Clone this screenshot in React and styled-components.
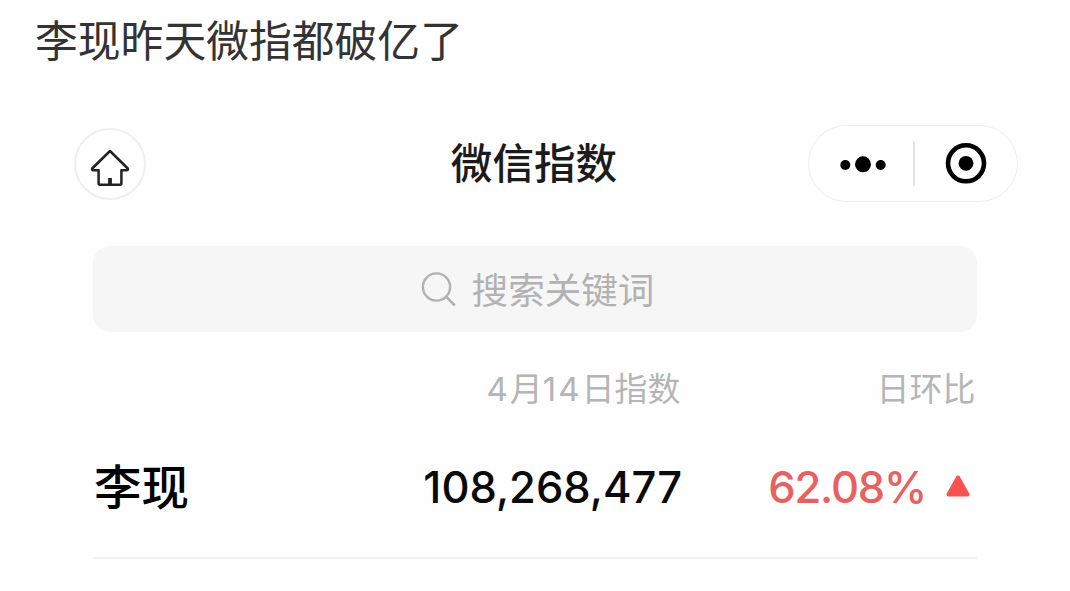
import React from "react";
import styled, { createGlobalStyle } from "styled-components";

const GlobalStyle = createGlobalStyle`
  * {
    box-sizing: border-box;
  }

  body {
    margin: 0;
    background: #fefefe;
    font-family: Inter, "Noto Sans CJK SC", sans-serif;
    overflow: hidden;
  }
`;

const Page = styled.div`
  width: 1070px;
  height: 591px;
  display: flex;
  flex-direction: column;
`;

const Caption = styled.p`
  margin: 0;
  padding: 12px 0 0 35px;
  height: 125px;
  color: #333;
  font-size: 42.8px;
  line-height: 60px;
  white-space: nowrap;
`;

const Nav = styled.header`
  display: grid;
  grid-template-columns: 1fr auto 1fr;
  align-items: center;
  height: 77px;
  padding: 0 76px 0 74px;
`;

const HomeButton = styled.button`
  display: flex;
  align-items: center;
  justify-content: center;
  width: 72px;
  height: 72px;
  padding: 6px 0 0;
  border: 2px solid #efefef;
  border-radius: 50%;
  background: #fff;
`;

const Title = styled.h1`
  margin: 0;
  color: #1b1b1b;
  font-size: 41.6px;
  font-weight: 500;
  line-height: 60px;
  white-space: nowrap;
`;

const Capsule = styled.div`
  display: flex;
  align-items: center;
  justify-self: end;
  width: 210px;
  height: 77px;
  margin-right: -24px;
  border: 1.5px solid #eee;
  border-radius: 39px;
  background: #fff;
`;

const CapsuleButton = styled.button`
  display: flex;
  align-items: center;
  justify-content: center;
  width: ${(props) => props.$width};
  height: 100%;
  padding: 0 0 0 ${(props) => props.$indent};
  border: none;
  background: none;
`;

const Divider = styled.span`
  width: 2px;
  height: 45px;
  background: #e2e2e2;
`;

const SearchBar = styled.div`
  display: flex;
  align-items: center;
  justify-content: center;
  gap: 15px;
  height: 86px;
  margin: 44px 93px 0;
  padding-left: 5px;
  border-radius: 17px;
  background: #f6f6f7;
  color: #b2b2b2;
  font-size: 36.6px;
  line-height: 54px;
`;

const Placeholder = styled.span`
  padding-top: 3px;
`;

const Table = styled.section`
  margin: 0 93px;
`;

const Row = styled.div`
  display: grid;
  grid-template-columns: 200px 389px 1fr;
  align-items: center;
`;

const HeadRow = styled(Row)`
  height: 112px;
  padding-top: 2px;
  color: #b5b5b5;
  font-size: 33px;
`;

const DataRow = styled(Row)`
  height: 115px;
  padding-bottom: 27px;
  border-bottom: 2px solid #f3f3f3;
`;

const Cell = styled.span`
  justify-self: end;
  line-height: 60px;
  white-space: nowrap;
`;

const HeadCell = styled(Cell)`
  padding-right: 1.5px;
`;

const Digits = styled.span`
  letter-spacing: 2px;
`;

const Keyword = styled.span`
  padding: 1px 0 0 1px;
  color: #000;
  font-size: 47.5px;
  font-weight: 500;
  line-height: 60px;
`;

const Value = styled(Cell)`
  color: ${(props) => props.$color};
  font-size: 43.5px;
  font-weight: 500;
  letter-spacing: ${(props) => props.$spacing};
`;

const Change = styled.div`
  display: flex;
  align-items: center;
  justify-content: flex-end;
  gap: 20px;
  padding-right: 7px;

  && svg {
    margin-bottom: 2px;
  }
`;

const HomeIcon = () => (
  <svg width="40" height="40" viewBox="0 0 40 40" fill="none">
    <path
      d="M20 4 L37.8 21.5 Q38.5 23.3 36.5 23.3 H31.4 V36.2 Q31.4 37.7 30 37.7 H10 Q8.6 37.7 8.6 36.2 V23.3 H3.5 Q1.5 23.3 2.2 21.5 Z"
      stroke="#222"
      strokeWidth="2.5"
      strokeLinejoin="round"
    />
    <path d="M20 31 V37" stroke="#222" strokeWidth="3.8" />
  </svg>
);

const MoreIcon = () => (
  <svg width="46" height="18" viewBox="0 0 46 18" fill="#000">
    <circle cx="5.3" cy="10" r="5" />
    <circle cx="23" cy="9.3" r="8" />
    <circle cx="40.7" cy="10" r="5" />
  </svg>
);

const TargetIcon = () => (
  <svg width="42" height="42" viewBox="0 0 42 42">
    <circle cx="21" cy="20.3" r="18" fill="none" stroke="#000" strokeWidth="4.6" />
    <circle cx="21" cy="20.3" r="7.4" fill="#000" />
  </svg>
);

const SearchIcon = () => (
  <svg width="36" height="36" viewBox="0 0 36 36" fill="none" stroke="#b2b2b2">
    <circle cx="15.5" cy="16" r="13.6" strokeWidth="2.4" />
    <path d="M25 25.5 L33.8 34.5" strokeWidth="2.6" />
  </svg>
);

const UpIcon = () => (
  <svg width="24" height="22" viewBox="0 0 24 22">
    <path
      d="M12 2.5 L21.5 19.5 H2.5 Z"
      fill="#fa5050"
      stroke="#fa5050"
      strokeWidth="4"
      strokeLinejoin="round"
    />
  </svg>
);

const rows = [{ keyword: "李现", index: "108,268,477", change: "62.08%" }];

const App = () => {
  return (
    <Page>
      <GlobalStyle />
      <Caption>李现昨天微指都破亿了</Caption>
      <Nav>
        <HomeButton aria-label="home">
          <HomeIcon />
        </HomeButton>
        <Title>微信指数</Title>
        <Capsule>
          <CapsuleButton $width="104px" $indent="4px" aria-label="more">
            <MoreIcon />
          </CapsuleButton>
          <Divider />
          <CapsuleButton $width="102px" $indent="0" aria-label="close">
            <TargetIcon />
          </CapsuleButton>
        </Capsule>
      </Nav>
      <SearchBar>
        <SearchIcon />
        <Placeholder>搜索关键词</Placeholder>
      </SearchBar>
      <Table>
        <HeadRow>
          <span />
          <HeadCell>
            <Digits>4</Digits>月<Digits>14</Digits>日指数
          </HeadCell>
          <HeadCell>日环比</HeadCell>
        </HeadRow>
        {rows.map((row) => (
          <DataRow key={row.keyword}>
            <Keyword>{row.keyword}</Keyword>
            <Value $color="#0a0a0a" $spacing="0">
              {row.index}
            </Value>
            <Change>
              <Value $color="#e96060" $spacing="-1.2px">
                {row.change}
              </Value>
              <UpIcon />
            </Change>
          </DataRow>
        ))}
      </Table>
    </Page>
  );
};

export default App;
